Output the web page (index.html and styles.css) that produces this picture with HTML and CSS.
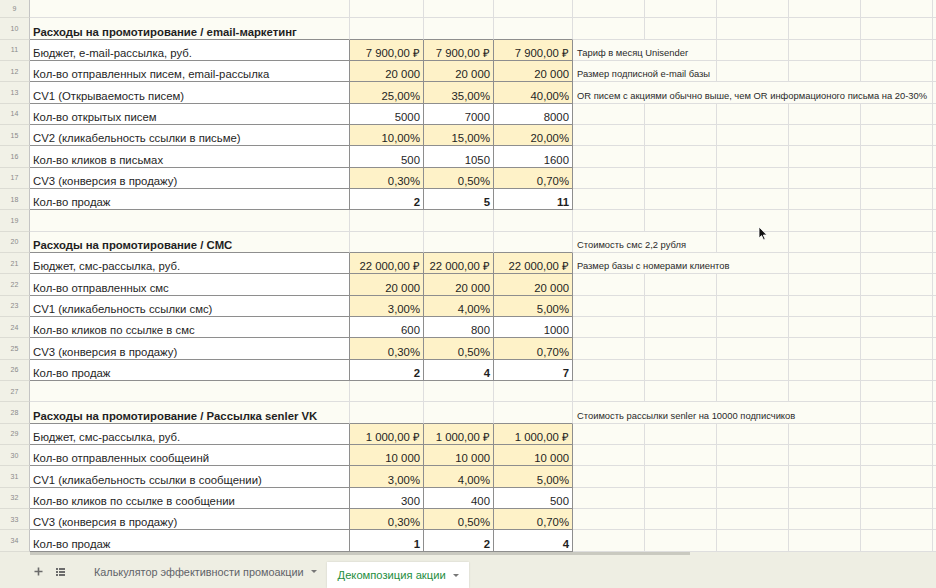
FILE: index.html
```html
<!DOCTYPE html>
<html lang="ru">
<head>
<meta charset="utf-8">
<title>Декомпозиция акции</title>
<link rel="stylesheet" href="styles.css">
</head>
<body>
<div class="sheet">
  <div class="row first"><div class="rn">9</div><div class="c"></div><div class="c"></div><div class="c"></div><div class="c"></div><div class="c"></div><div class="c"></div><div class="c"></div><div class="c"></div><div class="c"></div><div class="c"></div></div>
  <div class="row"><div class="rn">10</div><div class="c hd b">Расходы на промотирование / email-маркетинг</div><div class="c hd"></div><div class="c hd"></div><div class="c hd"></div><div class="c"></div><div class="c"></div><div class="c"></div><div class="c"></div><div class="c"></div><div class="c"></div></div>
  <div class="row"><div class="rn">11</div><div class="c t">Бюджет, e-mail-рассылка, руб.</div><div class="c t y n">7 900,00 ₽</div><div class="c t y n">7 900,00 ₽</div><div class="c t y n">7 900,00 ₽</div><div class="c note span2">Тариф в месяц Unisender</div><div class="c"></div><div class="c"></div><div class="c"></div><div class="c"></div></div>
  <div class="row"><div class="rn">12</div><div class="c t">Кол-во отправленных писем, email-рассылка</div><div class="c t y n">20 000</div><div class="c t y n">20 000</div><div class="c t y n">20 000</div><div class="c note span2">Размер подписной e-mail базы</div><div class="c"></div><div class="c"></div><div class="c"></div><div class="c"></div></div>
  <div class="row"><div class="rn">13</div><div class="c t">CV1 (Открываемость писем)</div><div class="c t y n">25,00%</div><div class="c t y n">35,00%</div><div class="c t y n">40,00%</div><div class="c note span5">OR писем с акциями обычно выше, чем OR информационого письма на 20-30%</div><div class="c"></div></div>
  <div class="row"><div class="rn">14</div><div class="c t">Кол-во открытых писем</div><div class="c t n">5000</div><div class="c t n">7000</div><div class="c t n">8000</div><div class="c"></div><div class="c"></div><div class="c"></div><div class="c"></div><div class="c"></div><div class="c"></div></div>
  <div class="row"><div class="rn">15</div><div class="c t">CV2 (кликабельность ссылки в письме)</div><div class="c t y n">10,00%</div><div class="c t y n">15,00%</div><div class="c t y n">20,00%</div><div class="c"></div><div class="c"></div><div class="c"></div><div class="c"></div><div class="c"></div><div class="c"></div></div>
  <div class="row"><div class="rn">16</div><div class="c t">Кол-во кликов в письмах</div><div class="c t n">500</div><div class="c t n">1050</div><div class="c t n">1600</div><div class="c"></div><div class="c"></div><div class="c"></div><div class="c"></div><div class="c"></div><div class="c"></div></div>
  <div class="row"><div class="rn">17</div><div class="c t">CV3 (конверсия в продажу)</div><div class="c t y n">0,30%</div><div class="c t y n">0,50%</div><div class="c t y n">0,70%</div><div class="c"></div><div class="c"></div><div class="c"></div><div class="c"></div><div class="c"></div><div class="c"></div></div>
  <div class="row"><div class="rn">18</div><div class="c t">Кол-во продаж</div><div class="c t n b">2</div><div class="c t n b">5</div><div class="c t n b">11</div><div class="c"></div><div class="c"></div><div class="c"></div><div class="c"></div><div class="c"></div><div class="c"></div></div>
  <div class="row"><div class="rn">19</div><div class="c"></div><div class="c"></div><div class="c"></div><div class="c"></div><div class="c"></div><div class="c"></div><div class="c"></div><div class="c"></div><div class="c"></div><div class="c"></div></div>
  <div class="row"><div class="rn">20</div><div class="c hd b">Расходы на промотирование / СМС</div><div class="c hd"></div><div class="c hd"></div><div class="c hd"></div><div class="c note span2">Стоимость смс 2,2 рубля</div><div class="c"></div><div class="c"></div><div class="c"></div><div class="c"></div></div>
  <div class="row"><div class="rn">21</div><div class="c t">Бюджет, смс-рассылка, руб.</div><div class="c t y n">22 000,00 ₽</div><div class="c t y n">22 000,00 ₽</div><div class="c t y n">22 000,00 ₽</div><div class="c note span3">Размер базы с номерами клиентов</div><div class="c"></div><div class="c"></div><div class="c"></div></div>
  <div class="row"><div class="rn">22</div><div class="c t">Кол-во отправленных смс</div><div class="c t y n">20 000</div><div class="c t y n">20 000</div><div class="c t y n">20 000</div><div class="c"></div><div class="c"></div><div class="c"></div><div class="c"></div><div class="c"></div><div class="c"></div></div>
  <div class="row"><div class="rn">23</div><div class="c t">CV1 (кликабельность ссылки смс)</div><div class="c t y n">3,00%</div><div class="c t y n">4,00%</div><div class="c t y n">5,00%</div><div class="c"></div><div class="c"></div><div class="c"></div><div class="c"></div><div class="c"></div><div class="c"></div></div>
  <div class="row"><div class="rn">24</div><div class="c t">Кол-во кликов по ссылке в смс</div><div class="c t n">600</div><div class="c t n">800</div><div class="c t n">1000</div><div class="c"></div><div class="c"></div><div class="c"></div><div class="c"></div><div class="c"></div><div class="c"></div></div>
  <div class="row"><div class="rn">25</div><div class="c t">CV3 (конверсия в продажу)</div><div class="c t y n">0,30%</div><div class="c t y n">0,50%</div><div class="c t y n">0,70%</div><div class="c"></div><div class="c"></div><div class="c"></div><div class="c"></div><div class="c"></div><div class="c"></div></div>
  <div class="row"><div class="rn">26</div><div class="c t">Кол-во продаж</div><div class="c t n b">2</div><div class="c t n b">4</div><div class="c t n b">7</div><div class="c"></div><div class="c"></div><div class="c"></div><div class="c"></div><div class="c"></div><div class="c"></div></div>
  <div class="row"><div class="rn">27</div><div class="c"></div><div class="c"></div><div class="c"></div><div class="c"></div><div class="c"></div><div class="c"></div><div class="c"></div><div class="c"></div><div class="c"></div><div class="c"></div></div>
  <div class="row"><div class="rn">28</div><div class="c hd b">Расходы на промотирование / Рассылка senler VK</div><div class="c hd"></div><div class="c hd"></div><div class="c hd"></div><div class="c note span4">Стоимость рассылки senler на 10000 подписчиков</div><div class="c"></div><div class="c"></div></div>
  <div class="row"><div class="rn">29</div><div class="c t">Бюджет, смс-рассылка, руб.</div><div class="c t y n">1 000,00 ₽</div><div class="c t y n">1 000,00 ₽</div><div class="c t y n">1 000,00 ₽</div><div class="c"></div><div class="c"></div><div class="c"></div><div class="c"></div><div class="c"></div><div class="c"></div></div>
  <div class="row"><div class="rn">30</div><div class="c t">Кол-во отправленных сообщеинй</div><div class="c t y n">10 000</div><div class="c t y n">10 000</div><div class="c t y n">10 000</div><div class="c"></div><div class="c"></div><div class="c"></div><div class="c"></div><div class="c"></div><div class="c"></div></div>
  <div class="row"><div class="rn">31</div><div class="c t">CV1 (кликабельность ссылки в сообщении)</div><div class="c t y n">3,00%</div><div class="c t y n">4,00%</div><div class="c t y n">5,00%</div><div class="c"></div><div class="c"></div><div class="c"></div><div class="c"></div><div class="c"></div><div class="c"></div></div>
  <div class="row"><div class="rn">32</div><div class="c t">Кол-во кликов по ссылке в сообщении</div><div class="c t n">300</div><div class="c t n">400</div><div class="c t n">500</div><div class="c"></div><div class="c"></div><div class="c"></div><div class="c"></div><div class="c"></div><div class="c"></div></div>
  <div class="row"><div class="rn">33</div><div class="c t">CV3 (конверсия в продажу)</div><div class="c t y n">0,30%</div><div class="c t y n">0,50%</div><div class="c t y n">0,70%</div><div class="c"></div><div class="c"></div><div class="c"></div><div class="c"></div><div class="c"></div><div class="c"></div></div>
  <div class="row"><div class="rn">34</div><div class="c t">Кол-во продаж</div><div class="c t n b">1</div><div class="c t n b">2</div><div class="c t n b">4</div><div class="c"></div><div class="c"></div><div class="c"></div><div class="c"></div><div class="c"></div><div class="c"></div></div>
</div>
<div class="footer">
  <div class="hscroll"></div>
  <div class="tabs">
    <div class="tool add"><svg width="9" height="9" viewBox="0 0 9 9"><path d="M4.5 0.5v8M0.5 4.5h8" stroke="#6b6b6b" stroke-width="1.6" fill="none"/></svg></div>
    <div class="tool list"><svg width="9" height="8" viewBox="0 0 9 8"><rect x="0" y="0" width="2" height="2" fill="#6b6b6b"/><rect x="3" y="0" width="6" height="2" fill="#6b6b6b"/><rect x="0" y="3" width="2" height="2" fill="#6b6b6b"/><rect x="3" y="3" width="6" height="2" fill="#6b6b6b"/><rect x="0" y="6" width="2" height="2" fill="#6b6b6b"/><rect x="3" y="6" width="6" height="2" fill="#6b6b6b"/></svg></div>
    <div class="tab">Калькулятор эффективности промоакции<span class="caret"></span></div>
    <div class="tab active">Декомпозиция акции<span class="caret"></span></div>
  </div>
</div>
<svg class="cursor" width="10" height="15" viewBox="0 0 10 15"><path d="M1 1 L1 12 L3.6 9.6 L5.6 14 L7.2 13.3 L5.3 9 L8.8 9 Z" fill="#111" stroke="#fff" stroke-width="0.8"/></svg>
</body>
</html>
```
FILE: styles.css
```css
* { box-sizing: border-box; }
html, body { margin: 0; padding: 0; }
body {
  width: 936px;
  height: 588px;
  overflow: hidden;
  position: relative;
  background: #fcfcf4;
  font-family: "Liberation Sans", Arial, sans-serif;
  color: #1f1f1f;
}
.sheet { height: 552px; overflow: hidden; }
.row {
  display: grid;
  grid-template-columns: 30px 320px 74px 70px 79px 72px 72px 72px 72px 72px 3px;
  height: 21.333px;
}
.row.first { height: 18.4px; }
.rn {
  background: #f1f1e7;
  border-right: 1px solid #c4c4c4;
  border-bottom: 1px solid #dcdcd4;
  font-size: 7px;
  color: #8a8a8a;
  display: flex;
  align-items: center;
  justify-content: center;
}
.c {
  border-right: 1px solid #dedede;
  border-bottom: 1px solid #dedede;
  font-size: 11.35px;
  line-height: 12px;
  padding: 0 3px 1px;
  display: flex;
  align-items: flex-end;
  white-space: nowrap;
  min-width: 0;
}
.c.t { background: #fff; border-right-color: #8e8e8e; border-bottom-color: #8e8e8e; }
.c.hd { border-bottom-color: #8e8e8e; }
.c.y { background: #fef2c8; }
.c.n { justify-content: flex-end; }
.c.b { font-weight: bold; }
.c.note { font-size: 9.4px; color: #2a2a2a; padding-left: 4px; }
.span2 { grid-column: span 2; }
.span3 { grid-column: span 3; }
.span4 { grid-column: span 4; }
.span5 { grid-column: span 5; }

.footer { height: 36px; background: #eeeee3; }
.hscroll { height: 3px; width: 660px; margin-left: 30px; background: #c9c9c0; }
.tabs { display: flex; align-items: center; height: 33px; padding-left: 31px; }
.tool { width: 14px; display: flex; justify-content: center; align-items: center; }
.list { margin-left: 8px; }
.tab {
  display: flex;
  align-items: center;
  font-size: 10.85px;
  color: #5f6368;
  padding: 0 10px 0 10px;
  margin-left: 17px;
  height: 26px;
}
.tab.active {
  margin-left: 0;
  align-self: flex-end;
  background: #fff;
  color: #1e8e3e;
  font-size: 11.2px;
  padding: 0 10px 0 11px;
  box-shadow: 0 0 2px rgba(0,0,0,0.12);
}
.caret {
  width: 0; height: 0;
  margin-left: 7px;
  border-left: 3px solid transparent;
  border-right: 3px solid transparent;
  border-top: 3px solid #777;
}
.cursor { position: absolute; left: 758px; top: 226px; }
```
